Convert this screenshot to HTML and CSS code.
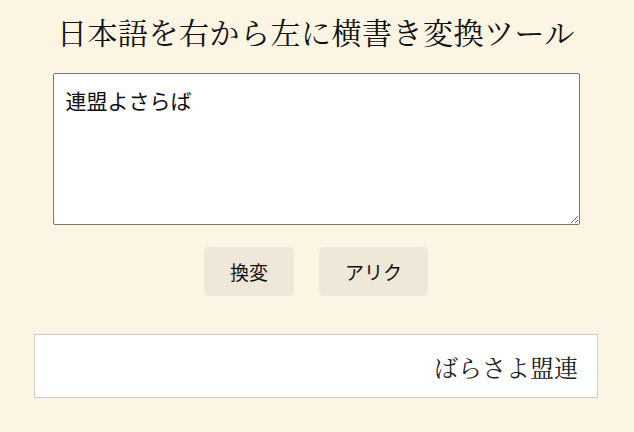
FILE: index.html
```html
<!DOCTYPE html>
<html lang="ja">
<head>
<meta charset="utf-8">
<title>日本語を右から左に横書き変換ツール</title>
<link rel="stylesheet" href="styles.css">
</head>
<body>
<main class="page">
  <h1 class="title">日本語を右から左に横書き変換ツール</h1>
  <textarea class="input">連盟よさらば</textarea>
  <div class="actions">
    <button class="btn">換変</button>
    <button class="btn">アリク</button>
  </div>
  <div class="output">ばらさよ盟連</div>
</main>
</body>
</html>
```
FILE: styles.css
```css
html, body {
  margin: 0;
  padding: 0;
  background: #fdf5e4;
}
.page {
  width: 564px;
  margin: 0 0 0 34px;
  display: flex;
  flex-direction: column;
  align-items: center;
  color: #111;
}
.title {
  margin: 11px 0 0;
  height: 40px;
  line-height: 40px;
  font-family: "Noto Serif CJK JP", serif;
  font-size: 30px;
  font-weight: normal;
  letter-spacing: 0.5px;
}
.input {
  margin-top: 22px;
  box-sizing: border-box;
  width: 527px;
  height: 152px;
  padding: 11px 12px;
  border: 1px solid #767676;
  border-radius: 2px;
  background: #fff;
  font-family: "Noto Sans CJK JP", sans-serif;
  font-size: 21px;
  line-height: 30px;
  color: #111;
  resize: vertical;
}
.actions {
  margin-top: 22px;
  display: flex;
  gap: 25px;
}
.btn {
  height: 49px;
  padding: 0 26px;
  border: none;
  border-radius: 5px;
  background: #efe8d8;
  font-family: "Noto Sans CJK JP", sans-serif;
  font-size: 19px;
  color: #111;
}
.output {
  margin-top: 38px;
  box-sizing: border-box;
  width: 564px;
  height: 64px;
  padding: 0 19px;
  border: 1px solid #ccc;
  background: #fff;
  display: flex;
  align-items: center;
  justify-content: flex-end;
  font-family: "Noto Serif CJK JP", serif;
  font-size: 24px;
  color: #222;
}
```
